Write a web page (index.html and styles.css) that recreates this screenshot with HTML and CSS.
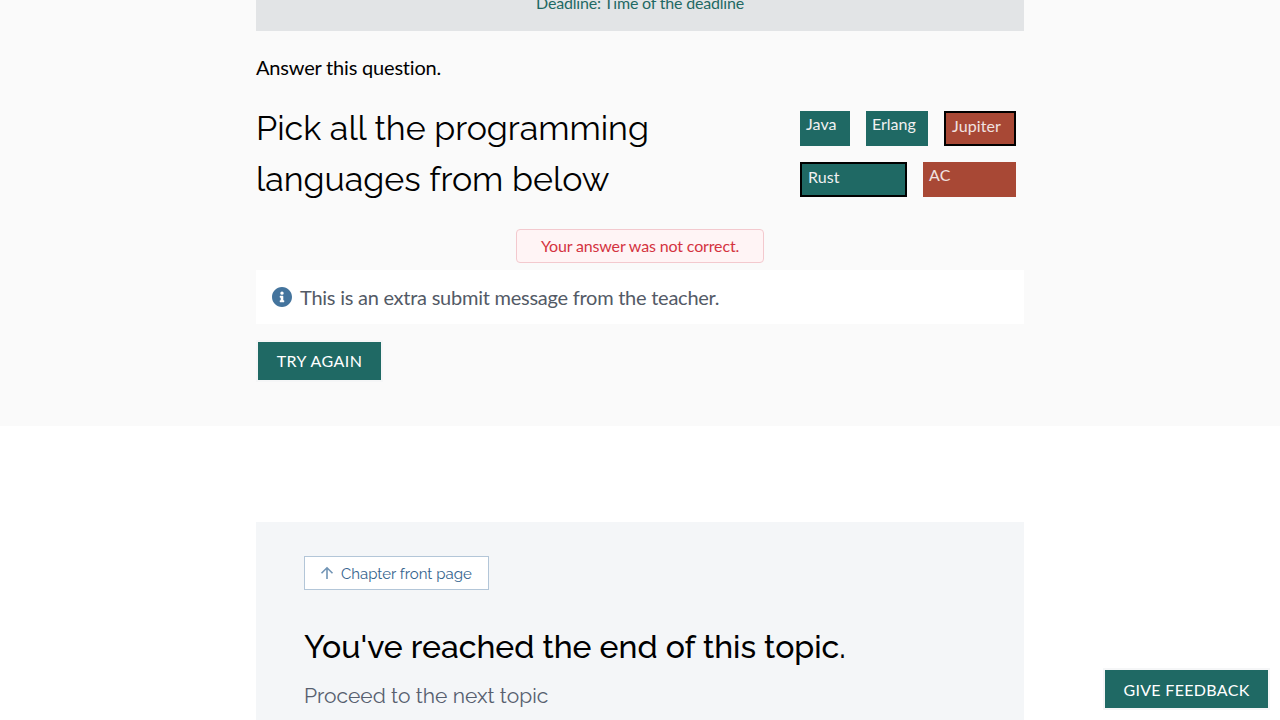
FILE: index.html
```html
<!DOCTYPE html>
<html lang="en">
<head>
<meta charset="utf-8">
<title>Exercise</title>
<link rel="stylesheet" href="styles.css">
</head>
<body>
<main class="exercise">
  <div class="column">
    <header class="deadline"><span>Deadline: Time of the deadline</span></header>
    <p class="instruction">Answer this question.</p>
    <section class="quiz">
      <h2 class="question">Pick all the programming<br>languages from below</h2>
      <div class="options">
        <div class="option-row">
          <button class="option java">Java</button>
          <button class="option erlang">Erlang</button>
          <button class="option wrong selected jupiter">Jupiter</button>
        </div>
        <div class="option-row">
          <button class="option selected rust">Rust</button>
          <button class="option wrong ac">AC</button>
        </div>
      </div>
    </section>
    <div class="result"><span>Your answer was not correct.</span></div>
    <div class="message">
      <svg class="info" viewBox="8 8 496 496" width="20" height="20"><path fill="#44749d" d="M256 8C119 8 8 119 8 256s111 248 248 248 248-111 248-248S393 8 256 8zm0 110a42 42 0 1 1 0 84 42 42 0 0 1 0-84zm56 254c0 7-5 12-12 12h-88c-7 0-12-5-12-12v-24c0-7 5-12 12-12h12v-64h-12c-7 0-12-5-12-12v-24c0-7 5-12 12-12h64c7 0 12 5 12 12v100h12c7 0 12 5 12 12v24z"/></svg>
      <span class="message-text">This is an extra submit message from the teacher.</span>
    </div>
    <button class="primary try"><span>TRY AGAIN</span></button>
  </div>
</main>
<section class="topic-end">
  <a class="front"><svg class="arrow" width="16" height="16" viewBox="0 0 16 16" fill="none" stroke="#7194b5" stroke-width="1.6"><path d="M8 14V3M2.500 8.200 8 2.800l5.500 5.400"/></svg><span class="front-text">Chapter front page</span></a>
  <h1 class="end-title"><span>You've reached the end of this topic.</span></h1>
  <p class="next"><span>Proceed to the next topic</span></p>
</section>
<button class="primary feedback"><span>GIVE FEEDBACK</span></button>
</body>
</html>
```
FILE: styles.css
```css
* { box-sizing: border-box; }
body { margin: 0; height: 720px; overflow: hidden; background: #fff; color: #000; font-family: Lato, sans-serif; font-variant-ligatures: none; }
h1, h2, p { margin: 0; }
button { font-family: Lato, sans-serif; }
.exercise { height: 426px; background: #fafafa; }
.column { width: 768px; margin: 0 auto; }
.deadline { height: 31px; background: #e2e4e6; color: #1f6964; text-align: center; font-size: 16px; line-height: 6px; letter-spacing: -.2px; }
.instruction { height: 72px; padding-top: 20px; font-size: 20px; line-height: 32px; letter-spacing: -.19px; }
.quiz { display: flex; height: 126px; }
.question { width: 544px; font: 400 34px/51px Raleway, Lato, sans-serif; letter-spacing: -.01px; }
.options { padding-top: 8px; width: 216px; display: flex; flex-direction: column; gap: 16px; }
.option-row { display: flex; gap: 16px; height: 35px; }
.option { border: 0; padding: 3px 6px; background: #1f6964; color: #f1f1f1; font-size: 16px; line-height: 19px; letter-spacing: .1px; display: flex; align-items: flex-start; }
.wrong { background: #a84835; color: #f0e2e0; }
.selected { border: 2px solid #000; }
.java { width: 50px; }
.erlang { width: 62px; letter-spacing: 0; }
.jupiter { width: 72px; }
.rust { width: 107px; }
.ac { width: 93px; }
.result { width: 248px; height: 34px; margin: 0 auto 7px; border: 1px solid #f3c9ce; border-radius: 4px; background: #fff4f5; color: #d4333f; font-size: 16px; line-height: 32px; text-align: center; letter-spacing: -.15px; }
.message { height: 54px; padding-left: 16px; display: flex; align-items: center; gap: 8px; background: #fff; color: #535a66; font-size: 20px; letter-spacing: -.25px; }
.primary { border: 2px solid #f5f6f7; background: #1f6964; color: #fff; font-size: 16px; line-height: 20px; letter-spacing: .32px; padding: 0; }
.try { width: 127px; height: 42px; margin-top: 16px; display: block; letter-spacing: .45px; }
.topic-end { width: 768px; height: 198px; margin: 96px auto 0; padding: 34px 48px 0; background: #f4f6f8; font-family: Raleway, Lato, sans-serif; }
.front { width: 185px; height: 34px; padding-left: 14px; display: flex; align-items: center; gap: 6px; border: 1px solid #b3c6d8; background: #fff; color: #35648e; font-size: 15px; font-weight: 400; }
.front-text { padding-top: 2px; }
.end-title { margin-top: 33px; font-size: 32px; line-height: 48px; font-weight: 500; }
.next { margin-top: 9px; font-size: 21px; line-height: 32px; color: #57606f; }
.feedback { position: fixed; right: 10px; bottom: 10px; width: 167px; height: 42px; padding-top: 1px; }
```
